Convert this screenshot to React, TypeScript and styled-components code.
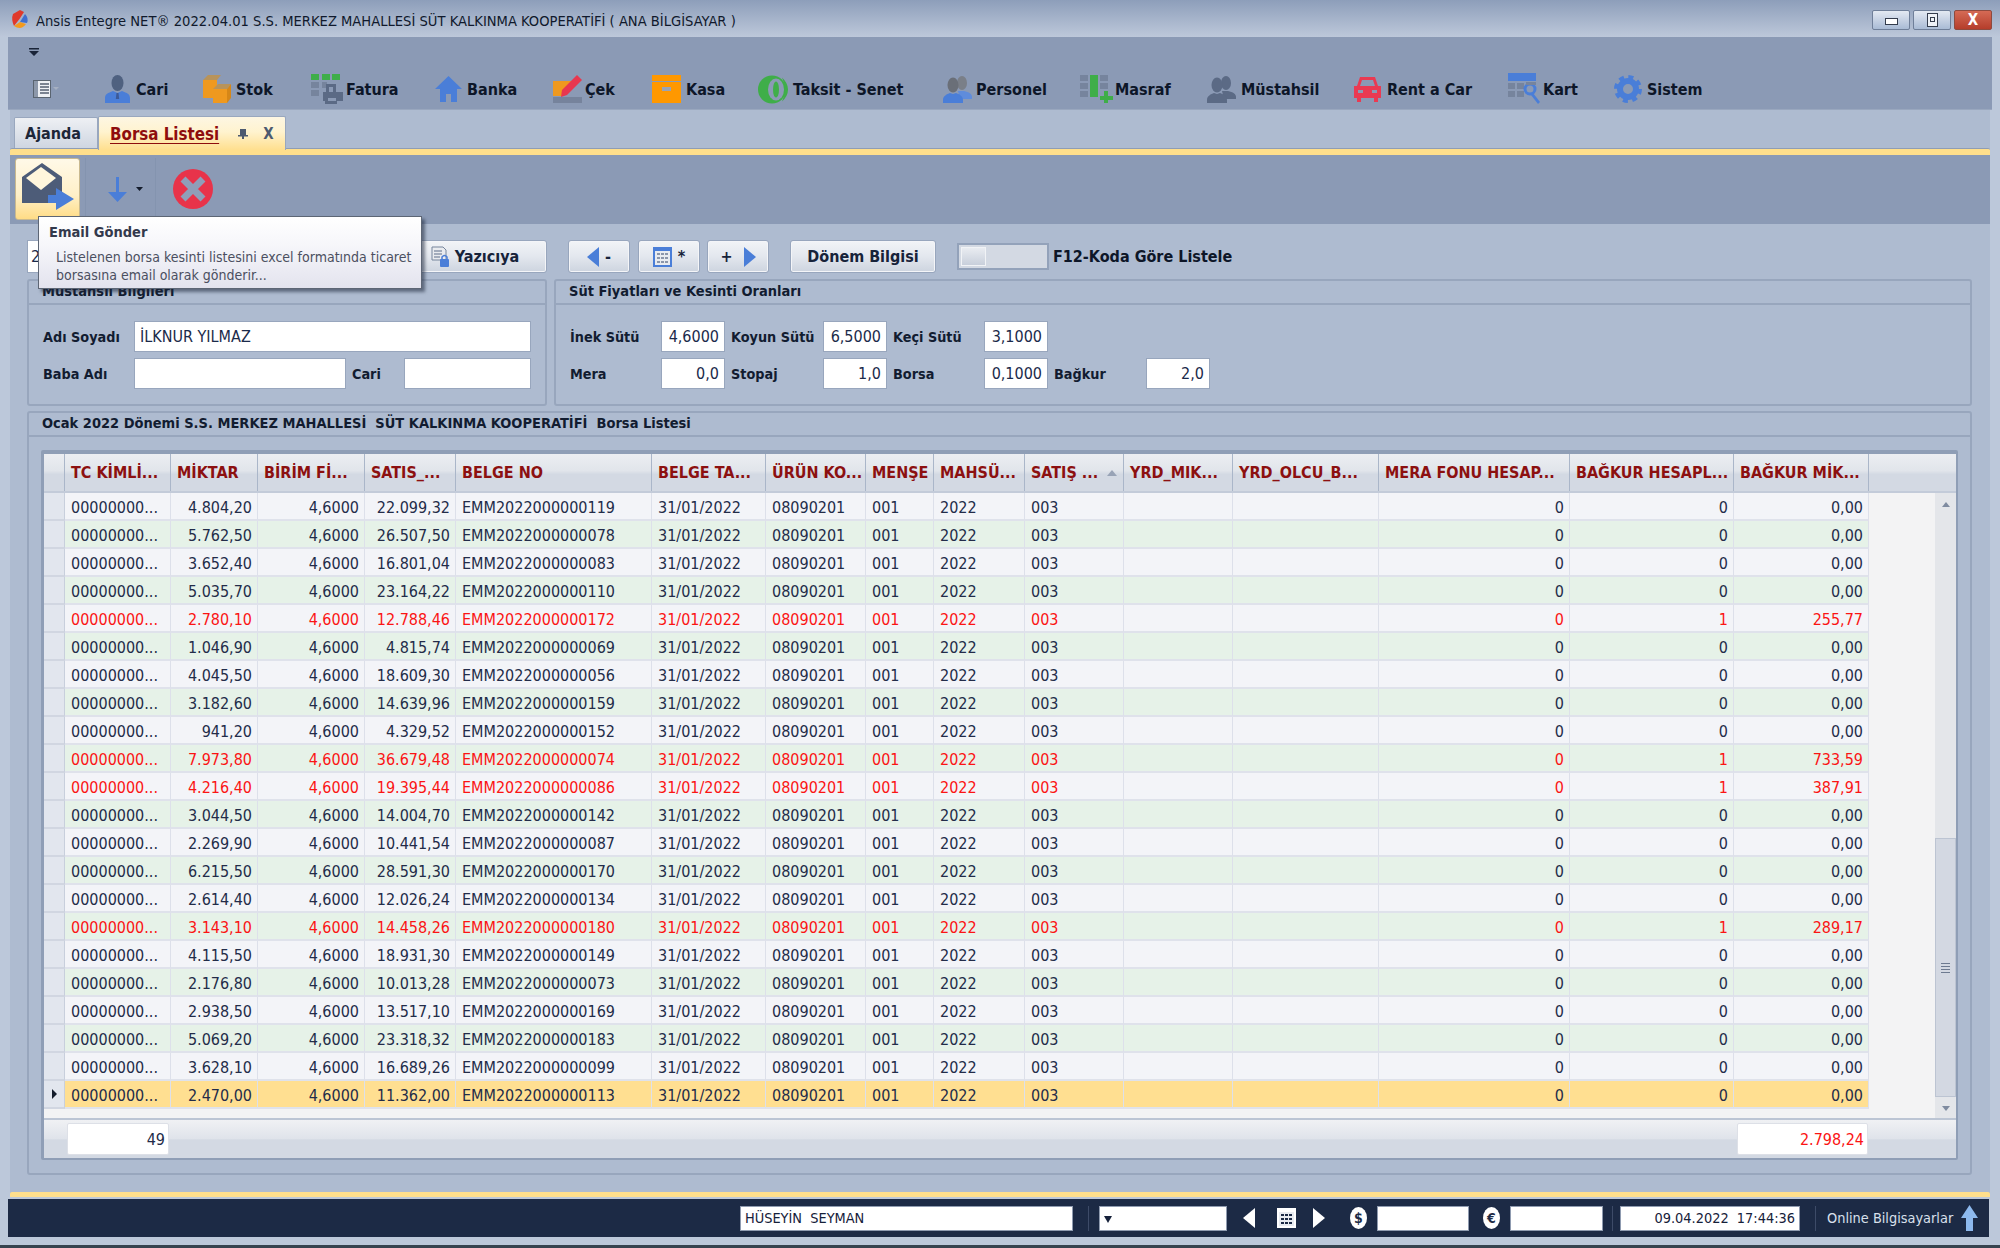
import React from 'react';
import styled, { createGlobalStyle } from 'styled-components';

const FONT = `"DejaVu Sans Condensed", "DejaVu Sans", sans-serif`;

const GlobalStyle = createGlobalStyle`
  html, body { margin: 0; padding: 0; background: #bcc8da; }
  body { font-family: ${FONT}; overflow: hidden; }
  * { box-sizing: border-box; }
`;

type Row = { miktar: string; satis: string; belge: string; bagkur?: string };

const ROWS: Row[] = [
  { miktar: '4.804,20', satis: '22.099,32', belge: '119' },
  { miktar: '5.762,50', satis: '26.507,50', belge: '078' },
  { miktar: '3.652,40', satis: '16.801,04', belge: '083' },
  { miktar: '5.035,70', satis: '23.164,22', belge: '110' },
  { miktar: '2.780,10', satis: '12.788,46', belge: '172', bagkur: '255,77' },
  { miktar: '1.046,90', satis: '4.815,74', belge: '069' },
  { miktar: '4.045,50', satis: '18.609,30', belge: '056' },
  { miktar: '3.182,60', satis: '14.639,96', belge: '159' },
  { miktar: '941,20', satis: '4.329,52', belge: '152' },
  { miktar: '7.973,80', satis: '36.679,48', belge: '074', bagkur: '733,59' },
  { miktar: '4.216,40', satis: '19.395,44', belge: '086', bagkur: '387,91' },
  { miktar: '3.044,50', satis: '14.004,70', belge: '142' },
  { miktar: '2.269,90', satis: '10.441,54', belge: '087' },
  { miktar: '6.215,50', satis: '28.591,30', belge: '170' },
  { miktar: '2.614,40', satis: '12.026,24', belge: '134' },
  { miktar: '3.143,10', satis: '14.458,26', belge: '180', bagkur: '289,17' },
  { miktar: '4.115,50', satis: '18.931,30', belge: '149' },
  { miktar: '2.176,80', satis: '10.013,28', belge: '073' },
  { miktar: '2.938,50', satis: '13.517,10', belge: '169' },
  { miktar: '5.069,20', satis: '23.318,32', belge: '183' },
  { miktar: '3.628,10', satis: '16.689,26', belge: '099' },
  { miktar: '2.470,00', satis: '11.362,00', belge: '113' },
];

const HEADERS = [
  'TC KİMLİ...', 'MİKTAR', 'BİRİM Fİ...', 'SATIS_...', 'BELGE NO', 'BELGE TA...', 'ÜRÜN KO...', 'MENŞE',
  'MAHSÜ...', 'SATIŞ ...', 'YRD_MIK...', 'YRD_OLCU_B...', 'MERA FONU HESAP...', 'BAĞKUR HESAPL...', 'BAĞKUR MİK...',
];

const COLS = '21px 106px 87px 107px 91px 196px 114px 100px 68px 91px 99px 109px 146px 191px 164px 135px';

const Win = styled.div`
  position: relative;
  width: 2000px;
  height: 1248px;
  background: #bcc8da;
  border-bottom: 3px solid #36434f;
  overflow: hidden;
`;

const TitleBar = styled.div`
  height: 37px;
  display: flex;
  align-items: center;
  padding: 3px 8px 0 11px;
  background: linear-gradient(#8d9eba, #bdc8da);
`;

const TitleText = styled.div`
  margin-left: 6px;
  font-size: 14.6px;
  color: #10192c;
  white-space: nowrap;
`;

const WinButtons = styled.div`
  margin-left: auto;
  display: flex;
  gap: 3px;
`;

const WinButton = styled.div<{ $close?: boolean }>`
  width: 38px;
  height: 20px;
  display: flex;
  align-items: center;
  justify-content: center;
  border: 1px solid ${p => (p.$close ? '#8e4a3e' : '#6f7f99')};
  border-radius: 2px;
  background: ${p => (p.$close ? 'linear-gradient(#d56a55, #b53d2b)' : 'linear-gradient(#e3e9f2, #a9bbd5)')};
  color: #fff;
  font-size: 15px;
  font-weight: bold;
`;

const Frame = styled.div`
  margin: 0 8px;
`;

const Menu = styled.div`
  height: 73px;
  background: #8b9ab5;
  border-bottom: 1px solid #99a7be;
  padding-left: 21px;
`;

const MenuTop = styled.div`
  height: 36px;
  padding: 11px 0 0 0;
`;

const MenuRow = styled.div`
  display: flex;
  align-items: center;
  height: 32px;
`;

const ListButton = styled.div`
  width: 76px;
  display: flex;
  align-items: center;
  gap: 1px;
  padding-left: 4px;
`;

const MenuItem = styled.div<{ $w: number; $gap: number }>`
  width: ${p => p.$w}px;
  display: flex;
  align-items: center;
  gap: ${p => p.$gap}px;
  font-size: 16px;
  font-weight: bold;
  color: #0d1628;
  white-space: nowrap;
`;

const Pane = styled.div`
  margin: 0 2px;
  background: #aebbd0;
`;

const TabStrip = styled.div`
  height: 38px;
  display: flex;
  align-items: flex-end;
  padding-left: 4px;
  position: relative;
`;

const Tab = styled.div<{ $active?: boolean }>`
  height: ${p => (p.$active ? 34 : 31)}px;
  width: ${p => (p.$active ? 188 : 84)}px;
  margin-bottom: ${p => (p.$active ? -2 : 0)}px;
  display: flex;
  align-items: center;
  padding-left: ${p => (p.$active ? 11 : 10)}px;
  border: 1px solid #99a7be;
  border-bottom: none;
  border-radius: 2px 2px 0 0;
  background: ${p => (p.$active ? 'linear-gradient(#fdf6e3, #fff3cf 45%, #ffdf8e)' : 'linear-gradient(#eef0f4, #cfd6e1)')};
  font-size: 16px;
  font-weight: bold;
  color: #1d2638;
  position: relative;
  z-index: 1;
`;

const TabLabel = styled.span`
  font-size: 16.8px;
  color: #8e0d0d;
  text-decoration: underline;
  text-underline-offset: 3px;
`;

const TabIcons = styled.div`
  margin-left: 19px;
  display: flex;
  align-items: center;
  gap: 15px;
  font-size: 15px;
  font-weight: bold;
  color: #4d5a70;
`;

const YellowLine = styled.div`
  height: 7px;
  border-top: 1px solid #8f9db5;
  background: #ffdf8c;
  border-radius: 2px 2px 0 0;
`;

const BottomLine = styled(YellowLine)`
  height: 5px;
  border-top: none;
`;

const ActionBar = styled.div`
  height: 69px;
  display: flex;
  background: #8b9ab5;
  padding: 3px 0 4px 5px;
`;

const EmailButton = styled.div`
  width: 65px;
  height: 62px;
  border: 1px solid #c9b98f;
  border-radius: 3px;
  background: linear-gradient(#fff9e8, #fff0c8 60%, #ffdc86);
`;

const DownButton = styled.div`
  width: 71px;
  margin-left: 5px;
  padding: 19px 0 0 22px;
  display: flex;
  align-items: flex-start;
  border-left: 1px solid #8494af;
  border-right: 1px solid #8494af;
  height: 62px;
`;

const CloseButton = styled.div`
  margin-left: 17px;
  padding-top: 11px;
`;

const Content = styled.div`
  padding: 16px 18px 17px 17px;
`;

const FilterRow = styled.div`
  display: flex;
  align-items: center;
  height: 33px;
`;

const FilterInput = styled.div`
  width: 385px;
  height: 33px;
  background: #fff;
  border: 1px solid #98a6bd;
  font-size: 16px;
  line-height: 31px;
  padding-left: 3px;
  color: #1b2a4a;
`;

const Btn = styled.div<{ $w: number; $ml: number; $pr?: number; $gap?: number }>`
  width: ${p => p.$w}px;
  margin-left: ${p => p.$ml}px;
  height: 33px;
  display: flex;
  align-items: center;
  justify-content: center;
  gap: ${p => p.$gap ?? 6}px;
  padding-right: ${p => p.$pr ?? 0}px;
  border: 1px solid #98a6bd;
  border-radius: 3px;
  background: linear-gradient(#f2f4f7, #e3e7ee 50%, #cdd4df);
  box-shadow: inset 0 0 0 1px #f4f5f8;
  font-size: 16px;
  font-weight: bold;
  color: #17233a;
`;

const Toggle = styled.div`
  width: 92px;
  height: 27px;
  margin-left: 21px;
  padding: 2px;
  border: 2px solid #93a2ba;
  background: #d3d9e3;
`;

const ToggleKnob = styled.div`
  width: 25px;
  height: 100%;
  border: 1px solid #f1f3f6;
  background: linear-gradient(#e9ecf1, #c8cfdb);
`;

const ToggleLabel = styled.div`
  margin-left: 4px;
  font-size: 16px;
  font-weight: bold;
  color: #0d1628;
`;

const PanelRow = styled.div`
  margin-top: 6px;
  display: flex;
  gap: 7px;
`;

const Panel = styled.div<{ $w?: number }>`
  flex: ${p => (p.$w ? `0 0 ${p.$w}px` : '1 1 0')};
  border: 2px solid #98a6bd;
  border-radius: 3px;
`;

const PanelTitle = styled.div`
  height: 24px;
  line-height: 21px;
  padding-left: 13px;
  font-size: 14.5px;
  font-weight: bold;
  color: #121c30;
  border-bottom: 2px solid #98a6bd;
  white-space: nowrap;
`;

const FormGrid = styled.div<{ $cols: string }>`
  display: grid;
  grid-template-columns: ${p => p.$cols};
  grid-auto-rows: 31px;
  row-gap: 6px;
  align-items: center;
  padding: 16px 0 15px 14px;
`;

const FieldLabel = styled.div<{ $pad?: boolean }>`
  font-size: 14.3px;
  font-weight: bold;
  color: #121c30;
  white-space: nowrap;
  padding-left: ${p => (p.$pad ? 6 : 0)}px;
`;

const Field = styled.div<{ $right?: boolean; $span?: string }>`
  height: 31px;
  grid-column: ${p => p.$span || 'auto'};
  background: #fff;
  border: 1px solid #98a6bd;
  font-size: 16px;
  line-height: 29px;
  padding: 0 5px;
  color: #1b2a4a;
  text-align: ${p => (p.$right ? 'right' : 'left')};
`;

const GridPanel = styled(Panel)`
  margin-top: 5px;
  flex: none;
`;

const GridOuter = styled.div`
  padding: 13px 12px 13px 12px;
`;

const GridBox = styled.div`
  border: 3px solid #8f9eb6;
  border-top-width: 4px;
  border-radius: 2px;
  border-right-width: 2px;
  border-bottom-width: 2px;
  background: #f3f3f4;
`;

const HeaderRow = styled.div`
  display: flex;
  height: 39px;
  border-bottom: 2px solid #c3cbd9;
  background: linear-gradient(#eceef2, #e1e5eb 45%, #d3d9e3 55%);
`;

const Columns = styled.div`
  display: grid;
  grid-template-columns: ${COLS};
`;

const HeaderCell = styled.div`
  display: flex;
  align-items: center;
  padding-left: 6px;
  border-right: 1px solid #aab6c9;
  font-size: 16px;
  font-weight: bold;
  color: #8c1010;
  white-space: nowrap;
  overflow: hidden;
`;

const SortMark = styled.span`
  margin: 0 6px 0 auto;
  width: 0;
  height: 0;
  border-left: 5px solid transparent;
  border-right: 5px solid transparent;
  border-bottom: 6px solid #98a3b6;
`;

const BodyWrap = styled.div`
  display: flex;
  justify-content: space-between;
  height: 625px;
`;

const DataRow = styled(Columns)<{ $even: boolean; $sel: boolean; $red: boolean }>`
  height: 28px;
  background: ${p => (p.$sel ? '#ffdf91' : p.$even ? '#e6f2e8' : '#f3f4f8')};
  color: ${p => (p.$red ? '#fb1414' : '#232c49')};
`;

const Cell = styled.div<{ $right?: boolean }>`
  display: flex;
  align-items: center;
  justify-content: ${p => (p.$right ? 'flex-end' : 'flex-start')};
  padding: 3px 5px 0 6px;
  border-right: 1px solid #dde0ea;
  border-bottom: 2px solid #dfe2eb;
  font-size: 16px;
  white-space: nowrap;
  overflow: hidden;
`;

const Indicator = styled.div`
  display: flex;
  align-items: center;
  justify-content: center;
  background: #e2e6ee;
  border-right: 1px solid #c8cfdc;
  border-bottom: 2px solid #d1d6e1;
`;

const IndicatorMark = styled.span`
  width: 0;
  height: 0;
  border-top: 5px solid transparent;
  border-bottom: 5px solid transparent;
  border-left: 5px solid #141c2c;
`;

const Scrollbar = styled.div`
  width: 21px;
  display: flex;
  flex-direction: column;
  align-items: center;
  background: #e4e6ea;
`;

const ScrollArrow = styled.span<{ $down?: boolean }>`
  margin: ${p => (p.$down ? '0 0 7px' : '9px 0 0')};
  width: 0;
  height: 0;
  border-left: 4px solid transparent;
  border-right: 4px solid transparent;
  ${p => (p.$down ? 'border-top: 5px solid #7f8ba0;' : 'border-bottom: 5px solid #7f8ba0;')}
`;

const ScrollSpacer = styled.div`
  flex: 1;
`;

const ScrollThumb = styled.div`
  width: 21px;
  height: 259px;
  margin-bottom: 9px;
  display: flex;
  flex-direction: column;
  align-items: center;
  justify-content: center;
  gap: 2px;
  background: #d3d8e2;
  border: 1px solid #bcc4d2;
`;

const Grip = styled.span`
  width: 9px;
  height: 1px;
  background: #6d7a90;
`;

const Footer = styled.div`
  height: 40px;
  display: flex;
  align-items: center;
  justify-content: space-between;
  padding: 0 88px 0 23px;
  border-top: 2px solid #bcc5d4;
  background: linear-gradient(#f0f1f4, #dfe3ea 50%, #d3d9e3 52%);
`;

const FooterBox = styled.div<{ $w: number; $red?: boolean }>`
  width: ${p => p.$w}px;
  height: 32px;
  border: 1px solid #dde0e7;
  border-radius: 2px;
  background: #fff;
  font-size: 16px;
  line-height: 32px;
  text-align: right;
  padding-right: 3px;
  color: ${p => (p.$red ? '#fb1414' : '#232c49')};
`;

const Status = styled.div`
  height: 38px;
  margin: 2px 3px 0 0;
  display: flex;
  align-items: center;
  padding-left: 732px;
  background: #1c2a45;
`;

const StatusBox = styled.div<{ $w: number; $ml?: number; $right?: boolean }>`
  width: ${p => p.$w}px;
  height: 25px;
  margin-left: ${p => p.$ml || 0}px;
  background: #fff;
  border: 1px solid #8f9bb0;
  font-size: 14.4px;
  line-height: 23px;
  padding: 0 4px;
  color: #16213a;
  white-space: nowrap;
  text-align: ${p => (p.$right ? 'right' : 'left')};
`;

const StatusSep = styled.div<{ $ml: number }>`
  width: 1px;
  height: 25px;
  margin-left: ${p => p.$ml}px;
  background: #3d4b68;
`;

const StatusIcon = styled.div<{ $ml: number }>`
  margin-left: ${p => p.$ml}px;
  display: flex;
`;

const OnlineText = styled.div`
  margin-left: 11px;
  font-size: 14.4px;
  color: #d9e0ec;
  white-space: nowrap;
`;

const Tooltip = styled.div`
  position: absolute;
  left: 38px;
  top: 216px;
  width: 384px;
  height: 73px;
  padding: 7px 10px;
  border: 1px solid #5d6675;
  background: linear-gradient(#ffffff, #f6f6fa 40%, #e3e3ee);
  box-shadow: 3px 3px 3px rgba(30, 40, 60, 0.55);
  color: #4b4f60;
  z-index: 5;
`;

const TooltipTitle = styled.div`
  font-size: 14.5px;
  font-weight: bold;
  color: #33394c;
  margin-bottom: 8px;
`;

const TooltipBody = styled.div`
  padding-left: 7px;
  font-size: 14px;
  line-height: 18px;
  white-space: nowrap;
`;

const BLUE = '#4a7ed8';
const GREEN = '#3fae49';
const SLATE = '#5b6a85';
const BG = '#8b9ab5';
const ORANGE = '#ef991f';

const Logo = () => (
  <svg width="19" height="20" viewBox="0 0 19 20">
    <path d="M9 0 L2 4 Q0 9 3 16 Q9 9 13 2 Z" fill="#e0392b" />
    <path d="M14 4 L9 12 L16 13 Q18 8 14 4 Z" fill="#3f6fd0" />
    <path d="M3 16 L9 12 L15 14 Q10 21 3 16 Z" fill="#f39a1e" />
  </svg>
);

const ListIcon = () => (
  <svg width="27" height="18" viewBox="0 0 27 18">
    <rect x="0.5" y="0.5" width="17" height="17" fill="#eef0f4" stroke="#5a6470" />
    <rect x="1" y="1" width="4" height="16" fill="#8d98aa" />
    <path d="M7 4h9M7 7h9M7 10h9M7 13h9" stroke="#555f70" strokeWidth="1.4" />
    <path d="M20 7h6l-3 3z" fill="#a6b0c2" />
  </svg>
);

const CariIcon = () => (
  <svg width="25" height="28" viewBox="0 0 25 28">
    <ellipse cx="12.5" cy="8" rx="6" ry="8" fill="#4f6180" />
    <path d="M0 28v-5c0-4 3-5 8-7l4.500 2 4.500-2c5 2 8 3 8 7v5z" fill={BLUE} />
    <path d="M11.500 18h2l.7 6h-3.400z" fill="#3c5a98" />
  </svg>
);

const StokIcon = () => (
  <svg width="28" height="28" viewBox="0 0 28 28">
    <path d="M0 5h14l4-5H5z" fill="#b8935a" />
    <rect x="0" y="5" width="14" height="18" fill={ORANGE} />
    <path d="M10 14h14l4-5H15z" fill="#b8935a" />
    <rect x="10" y="14" width="14" height="14" fill={ORANGE} />
    <path d="M24 14l4-5v14l-4 5z" fill="#d68718" />
  </svg>
);

const FaturaIcon = () => (
  <svg width="33" height="30" viewBox="0 0 33 30">
    <path d="M0 0h8v6H0zM11 0h8v6h-8zM21 0h8v6h-8z" fill={GREEN} />
    <path d="M0 8h8v6H0zM0 16h8v6H0zM11 8h5v6h-5z" fill="#76849d" />
    <path d="M15 10h10v8h7v9h-6v3H14v-3h-2v-9h3z" fill={SLATE} />
    <path d="M18 13h4v5h-4zM17 24h8v3h-8z" fill={BG} />
  </svg>
);

const BankaIcon = () => (
  <svg width="27" height="26" viewBox="0 0 27 26">
    <path d="M13.500 0L27 13h-5v13h-6v-8h-5v8H5V13H0z" fill={BLUE} />
  </svg>
);

const CekIcon = () => (
  <svg width="29" height="28" viewBox="0 0 29 28">
    <path d="M0 6h21L10 19l-1 2H0z" fill={ORANGE} />
    <path d="M24 0l5 5-15 15-6 2 1-7z" fill="#e8374f" />
    <rect x="0" y="22" width="29" height="6" fill="#76839c" />
  </svg>
);

const KasaIcon = () => (
  <svg width="29" height="28" viewBox="0 0 29 28">
    <rect width="29" height="6" fill="#ff9800" />
    <rect y="7" width="29" height="21" fill="#ff9800" />
    <rect x="10" y="12" width="9" height="4" fill="#9aa3b5" />
  </svg>
);

const TaksitIcon = () => (
  <svg width="30" height="29" viewBox="0 0 30 29">
    <circle cx="14" cy="14.500" r="14" fill={GREEN} />
    <ellipse cx="18" cy="14.500" rx="8" ry="11" fill={BG} />
    <ellipse cx="18" cy="14.500" rx="3" ry="8" fill={GREEN} />
    <path d="M24 2.500Q30 8 30 14.500T24 26.500Q27 20 27 14.500T24 2.500z" fill={GREEN} />
  </svg>
);

const People = ({ back, front, body, backBody }: { back: string; front: string; body: string; backBody: string }) => (
  <svg width="29" height="28" viewBox="0 0 29 28">
    <ellipse cx="19" cy="8" rx="5" ry="7" fill={back} />
    <path d="M15 16h6c5 1 8 3 8 6v2H17z" fill={backBody} />
    <ellipse cx="10" cy="10" rx="5.500" ry="7.500" fill={front} />
    <path d="M0 28v-3c0-4 4-6 7-7l3 1 3-1c3 1 7 3 7 7v3z" fill={body} />
  </svg>
);

const MasrafIcon = () => (
  <svg width="33" height="28" viewBox="0 0 33 28">
    <path d="M0 0h8v6H0zM0 8h8v6H0zM0 16h8v6H0zM20 0h8v6h-8zM20 8h8v6h-8z" fill="#76849d" />
    <rect x="10" y="0" width="8" height="22" fill={GREEN} />
    <path d="M24 16h4v5h5v4h-5v3h-4v-3h-4v-4h4z" fill={GREEN} />
  </svg>
);

const CarIcon = () => (
  <svg width="27" height="25" viewBox="0 0 27 25">
    <path d="M6 0h15l3 9h3v12h-3v4h-4v-4H7v4H3v-4H0V9h3zM8 3L6 9h15l-2-6z" fill="#ea3a52" fillRule="evenodd" />
    <path d="M4 13h5v3H4zM18 13h5v3h-5z" fill={BG} />
  </svg>
);

const KartIcon = () => (
  <svg width="33" height="32" viewBox="0 0 33 32">
    <rect width="28" height="8" fill={BLUE} />
    <path d="M0 10h7v6H0zM9 10h7v6H9zM0 18h7v6H0zM9 18h7v6H9z" fill="#76849d" />
    <circle cx="22" cy="16" r="5" fill="none" stroke={BLUE} strokeWidth="3" />
    <path d="M25 20l7 9-2 2-7-9z" fill={BLUE} />
    <path d="M18 9h10v3H18z" fill="#76849d" />
  </svg>
);

const GearIcon = () => (
  <svg width="28" height="28" viewBox="0 0 28 28">
    <circle cx="14" cy="14" r="8" fill="none" stroke={BLUE} strokeWidth="6" />
    <circle cx="14" cy="14" r="12" fill="none" stroke={BLUE} strokeWidth="4" strokeDasharray="5 4.420" />
  </svg>
);

const EmailIcon = () => (
  <svg width="63" height="60" viewBox="0 0 63 60">
    <path d="M26 4L46 18v18H37v8H6V18z" fill="#4d5c78" />
    <path d="M10 19L25 8l15 11-15 12z" fill="#fff6dc" />
    <path d="M32 36h8v-7l18 11-18 11v-7h-8z" fill={BLUE} />
  </svg>
);

const DownIcon = () => (
  <svg width="36" height="26" viewBox="0 0 36 26">
    <path d="M8 0h3v15h8L9.500 25 0 15h8z" fill={BLUE} />
    <path d="M28 10h7l-3.500 4z" fill="#141c2c" />
  </svg>
);

const StopIcon = () => (
  <svg width="40" height="40" viewBox="0 0 40 40">
    <circle cx="20" cy="20" r="20" fill="#e8334a" />
    <path d="M10 10l20 20M30 10L10 30" stroke="#8f9eb9" strokeWidth="7" />
  </svg>
);

const PrintIcon = () => (
  <svg width="20" height="22" viewBox="0 0 20 22">
    <path d="M1 1h11l3 3v10H1z" fill="#e9ebef" stroke="#77859c" />
    <path d="M3 5h8M3 8h8M3 11h6" stroke="#8c98ac" strokeWidth="1.300" />
    <rect x="9" y="13" width="9" height="8" rx="1" fill={BLUE} />
    <path d="M11 13v-2q2.500-3 5 0v2" fill="none" stroke={BLUE} strokeWidth="1.500" />
  </svg>
);

const TriLeft = ({ c = BLUE }: { c?: string }) => (
  <svg width="12" height="20" viewBox="0 0 12 20">
    <path d="M12 0v20L0 10z" fill={c} />
  </svg>
);

const TriRight = ({ c = BLUE }: { c?: string }) => (
  <svg width="12" height="20" viewBox="0 0 12 20">
    <path d="M0 0v20l12-10z" fill={c} />
  </svg>
);

const CalIcon = ({ top = BLUE, cell = '#8b96aa' }: { top?: string; cell?: string }) => (
  <svg width="19" height="20" viewBox="0 0 19 20">
    <rect width="19" height="20" fill={top} />
    <rect x="2" y="4" width="15" height="14" fill="#e8ebf0" />
    <path d="M4 6h3v2H4zM8 6h3v2H8zM12 6h3v2h-3zM4 10h3v2H4zM8 10h3v2H8zM12 10h3v2h-3zM4 14h3v2H4zM8 14h3v2H8zM12 14h3v2h-3z" fill={cell} />
  </svg>
);

const Coin = ({ ch }: { ch: string }) => (
  <svg width="17" height="24" viewBox="0 0 17 24">
    <ellipse cx="8.500" cy="12" rx="8.500" ry="11" fill="#fff" />
    <text x="8.500" y="17" textAnchor="middle" fontSize="14" fontWeight="bold" fill="#1c2a45" fontFamily="DejaVu Sans Condensed">
      {ch}
    </text>
  </svg>
);

const MENU = [
  { label: 'Cari', w: 98, gap: 6, icon: <CariIcon /> },
  { label: 'Stok', w: 108, gap: 5, icon: <StokIcon /> },
  { label: 'Fatura', w: 124, gap: 2, icon: <FaturaIcon /> },
  { label: 'Banka', w: 118, gap: 5, icon: <BankaIcon /> },
  { label: 'Çek', w: 99, gap: 3, icon: <CekIcon /> },
  { label: 'Kasa', w: 106, gap: 5, icon: <KasaIcon /> },
  { label: 'Taksit - Senet', w: 185, gap: 5, icon: <TaksitIcon /> },
  { label: 'Personel', w: 137, gap: 4, icon: <People back="#7a7f88" front="#6a6f78" body={BLUE} backBody="#5f8cdc" /> },
  { label: 'Masraf', w: 127, gap: 2, icon: <MasrafIcon /> },
  { label: 'Müstahsil', w: 147, gap: 5, icon: <People back={SLATE} front={SLATE} body={SLATE} backBody={SLATE} /> },
  { label: 'Rent a Car', w: 154, gap: 6, icon: <CarIcon /> },
  { label: 'Kart', w: 106, gap: 2, icon: <KartIcon /> },
  { label: 'Sistem', w: 100, gap: 5, icon: <GearIcon /> },
];

const App: React.FC = () => (
  <Win>
    <GlobalStyle />
    <TitleBar>
      <Logo />
      <TitleText>Ansis Entegre NET® 2022.04.01 S.S. MERKEZ MAHALLESİ SÜT KALKINMA KOOPERATİFİ ( ANA BİLGİSAYAR )</TitleText>
      <WinButtons>
        <WinButton>
          <svg width="13" height="10" viewBox="0 0 13 10">
            <rect x="0.500" y="3.500" width="12" height="6" fill="#fff" stroke="#333c4c" />
          </svg>
        </WinButton>
        <WinButton>
          <svg width="11" height="14" viewBox="0 0 11 14">
            <rect x="0.500" y="0.500" width="10" height="13" fill="#eef2f7" stroke="#333c4c" />
            <rect x="3.500" y="4.500" width="4" height="4" fill="none" stroke="#333c4c" />
          </svg>
        </WinButton>
        <WinButton $close>X</WinButton>
      </WinButtons>
    </TitleBar>
    <Frame>
      <Menu>
        <MenuTop>
          <svg width="10" height="8" viewBox="0 0 10 8" style={{ display: 'block' }}>
            <path d="M0 0h10v1.500H0zM0 3h10L5 8z" fill="#1a2438" />
          </svg>
        </MenuTop>
        <MenuRow>
          <ListButton>
            <ListIcon />
          </ListButton>
          {MENU.map(m => (
            <MenuItem key={m.label} $w={m.w} $gap={m.gap}>
              {m.icon}
              {m.label}
            </MenuItem>
          ))}
        </MenuRow>
      </Menu>
      <Pane>
        <TabStrip>
          <Tab>Ajanda</Tab>
          <Tab $active>
            <TabLabel>Borsa Listesi</TabLabel>
            <TabIcons>
              <svg width="10" height="11" viewBox="0 0 10 11">
                <path d="M2 1h6v6H2zM0 7h10v1.500H0zM4 8h2v3H4z" fill="#4d5a70" />
              </svg>
              <span>X</span>
            </TabIcons>
          </Tab>
        </TabStrip>
        <YellowLine />
        <ActionBar>
          <EmailButton>
            <EmailIcon />
          </EmailButton>
          <DownButton>
            <DownIcon />
          </DownButton>
          <CloseButton>
            <StopIcon />
          </CloseButton>
        </ActionBar>
        <Content>
          <FilterRow>
            <FilterInput>2</FilterInput>
            <Btn $w={135} $ml={0} $pr={9} $gap={4}>
              <PrintIcon />
              Yazıcıya
            </Btn>
            <Btn $w={62} $ml={21}>
              <TriLeft /> -
            </Btn>
            <Btn $w={62} $ml={8}>
              <CalIcon /> *
            </Btn>
            <Btn $w={62} $ml={7} $gap={11}>
              + <TriRight />
            </Btn>
            <Btn $w={146} $ml={21}>Dönem Bilgisi</Btn>
            <Toggle>
              <ToggleKnob />
            </Toggle>
            <ToggleLabel>F12-Koda Göre Listele</ToggleLabel>
          </FilterRow>
          <PanelRow>
            <Panel $w={520}>
              <PanelTitle>Müstahsil Bilgileri</PanelTitle>
              <FormGrid $cols="91px 212px 58px 127px">
                <FieldLabel>Adı Soyadı</FieldLabel>
                <Field $span="2 / 5">İLKNUR YILMAZ</Field>
                <FieldLabel>Baba Adı</FieldLabel>
                <Field />
                <FieldLabel $pad>Cari</FieldLabel>
                <Field />
              </FormGrid>
            </Panel>
            <Panel>
              <PanelTitle>Süt Fiyatları ve Kesinti Oranları</PanelTitle>
              <FormGrid $cols="91px 64px 98px 64px 97px 64px 98px 64px">
                <FieldLabel>İnek Sütü</FieldLabel>
                <Field $right>4,6000</Field>
                <FieldLabel $pad>Koyun Sütü</FieldLabel>
                <Field $right>6,5000</Field>
                <FieldLabel $pad>Keçi Sütü</FieldLabel>
                <Field $right>3,1000</Field>
                <span />
                <span />
                <FieldLabel>Mera</FieldLabel>
                <Field $right>0,0</Field>
                <FieldLabel $pad>Stopaj</FieldLabel>
                <Field $right>1,0</Field>
                <FieldLabel $pad>Borsa</FieldLabel>
                <Field $right>0,1000</Field>
                <FieldLabel $pad>Bağkur</FieldLabel>
                <Field $right>2,0</Field>
              </FormGrid>
            </Panel>
          </PanelRow>
          <GridPanel>
            <PanelTitle>Ocak 2022 Dönemi S.S. MERKEZ MAHALLESİ&nbsp; SÜT KALKINMA KOOPERATİFİ&nbsp; Borsa Listesi</PanelTitle>
            <GridOuter>
              <GridBox>
                <HeaderRow>
                  <Columns>
                    <HeaderCell />
                    {HEADERS.map(h => (
                      <HeaderCell key={h}>
                        {h}
                        {h === 'SATIŞ ...' && <SortMark />}
                      </HeaderCell>
                    ))}
                  </Columns>
                </HeaderRow>
                <BodyWrap>
                  <div>
                    {ROWS.map((r, i) => {
                      const sel = i === ROWS.length - 1;
                      return (
                        <DataRow key={r.belge} $even={i % 2 === 1} $sel={sel} $red={!!r.bagkur}>
                          <Indicator>{sel && <IndicatorMark />}</Indicator>
                          <Cell>00000000...</Cell>
                          <Cell $right>{r.miktar}</Cell>
                          <Cell $right>4,6000</Cell>
                          <Cell $right>{r.satis}</Cell>
                          <Cell>EMM2022000000{r.belge}</Cell>
                          <Cell>31/01/2022</Cell>
                          <Cell>08090201</Cell>
                          <Cell>001</Cell>
                          <Cell>2022</Cell>
                          <Cell>003</Cell>
                          <Cell />
                          <Cell />
                          <Cell $right>0</Cell>
                          <Cell $right>{r.bagkur ? 1 : 0}</Cell>
                          <Cell $right>{r.bagkur || '0,00'}</Cell>
                        </DataRow>
                      );
                    })}
                  </div>
                  <Scrollbar>
                    <ScrollArrow />
                    <ScrollSpacer />
                    <ScrollThumb>
                      <Grip />
                      <Grip />
                      <Grip />
                      <Grip />
                    </ScrollThumb>
                    <ScrollArrow $down />
                  </Scrollbar>
                </BodyWrap>
                <Footer>
                  <FooterBox $w={102}>49</FooterBox>
                  <FooterBox $w={131} $red>2.798,24</FooterBox>
                </Footer>
              </GridBox>
            </GridOuter>
          </GridPanel>
        </Content>
        <BottomLine />
      </Pane>
      <Status>
        <StatusBox $w={333}>HÜSEYİN&nbsp; SEYMAN</StatusBox>
        <StatusSep $ml={15} />
        <StatusBox $w={128} $ml={10}>
          <svg width="8" height="7" viewBox="0 0 8 7">
            <path d="M0 0h8L4 7z" fill="#16213a" />
          </svg>
        </StatusBox>
        <StatusIcon $ml={16}>
          <TriLeft c="#fff" />
        </StatusIcon>
        <StatusIcon $ml={22}>
          <CalIcon top="#fff" cell="#1c2a45" />
        </StatusIcon>
        <StatusIcon $ml={17}>
          <TriRight c="#fff" />
        </StatusIcon>
        <StatusIcon $ml={25}>
          <Coin ch="$" />
        </StatusIcon>
        <StatusBox $w={92} $ml={10} />
        <StatusIcon $ml={14}>
          <Coin ch="€" />
        </StatusIcon>
        <StatusBox $w={93} $ml={10} />
        <StatusSep $ml={9} />
        <StatusBox $w={180} $ml={7} $right>09.04.2022&nbsp; 17:44:36</StatusBox>
        <StatusSep $ml={15} />
        <OnlineText>Online Bilgisayarlar</OnlineText>
        <StatusIcon $ml={8}>
          <svg width="17" height="26" viewBox="0 0 17 26">
            <path d="M8.500 0L17 13h-5v13H5V13H0z" fill="#8db9ee" />
          </svg>
        </StatusIcon>
      </Status>
    </Frame>
    <Tooltip>
      <TooltipTitle>Email Gönder</TooltipTitle>
      <TooltipBody>
        Listelenen borsa kesinti listesini excel formatında ticaret
        <br />
        borsasına email olarak gönderir...
      </TooltipBody>
    </Tooltip>
  </Win>
);

export default App;
